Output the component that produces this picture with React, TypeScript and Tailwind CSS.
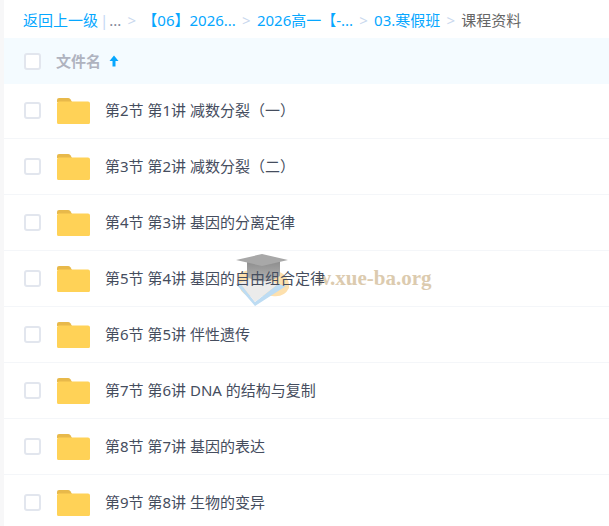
import React from "react";

const rows = [
  "第2节 第1讲 减数分裂（一）",
  "第3节 第2讲 减数分裂（二）",
  "第4节 第3讲 基因的分离定律",
  "第5节 第4讲 基因的自由组合定律",
  "第6节 第5讲 伴性遗传",
  "第7节 第6讲 DNA 的结构与复制",
  "第8节 第7讲 基因的表达",
  "第9节 第8讲 生物的变异",
];

function Folder() {
  return (
    <svg width="33" height="26" viewBox="0 0 33 26" className="shrink-0 block">
      <path d="M0 2a2 2 0 0 1 2-2h9a3 3 0 0 1 2.4 1.2L15 4H0z" fill="#e8b94a" />
      <path d="M0 5.5a2 2 0 0 1 2-2h29a2 2 0 0 1 2 2V24.5a1.5 1.5 0 0 1-1.5 1.5H1.5A1.5 1.5 0 0 1 0 24.5z" fill="#ffd257" />
    </svg>
  );
}

function Check() {
  return <span className="block w-[17px] h-[17px] rounded-[3px] border-2 border-[#e2e6ee] bg-white shrink-0" />;
}

function Sep() {
  return <span className="text-[#c9d8ee] mx-[6px] w-[9px] text-center">&gt;</span>;
}

export default function App() {
  return (
    <div
      className="relative w-[609px] h-[526px] overflow-hidden bg-white pl-1"
      style={{ fontFamily: '"Noto Sans", "Noto Sans CJK SC", sans-serif' }}
    >
      <div className="absolute left-0 top-0 bottom-0 w-1 bg-[#f7f7f8]" />
      <div className="h-[38px] pl-[19px] pt-[3px] flex items-center text-[15px] text-[#06a7ff] whitespace-nowrap">
        <span>返回上一级</span>
        <span className="text-[#c4d8f4] ml-[2px] mr-px">|</span>
        <span className="text-[#818999]">...</span>
        <Sep />
        <span>【06】2026...</span>
        <Sep />
        <span>2026高一【-...</span>
        <Sep />
        <span>03.寒假班</span>
        <Sep />
        <span className="text-[#666]">课程资料</span>
      </div>
      <div className="h-[46px] bg-[#f4fbff] pl-5 flex items-center">
        <Check />
        <span className="ml-[15px] text-[15px] font-bold text-[#afb3bf]">文件名</span>
        <svg width="10" height="12" viewBox="0 0 10 12" className="ml-2">
          <path d="M5 0.5 L9.5 6 H6.5 V11.5 H3.5 V6 H0.5 Z" fill="#06a7ff" />
        </svg>
      </div>
      <div className="relative z-10 -mt-px">
        {rows.map((t) => (
          <div key={t} className="h-[56px] pl-5 flex items-center border-b border-[#f4f6f9]">
            <Check />
            <span className="ml-4"><Folder /></span>
            <span className="ml-[15px] text-[15px] text-[#454d5e] whitespace-nowrap">{t}</span>
          </div>
        ))}
      </div>
      <div className="absolute left-[234px] top-[252px] w-[200px] h-[56px] pointer-events-none">
        <svg width="64" height="56" viewBox="0 0 64 56" className="absolute left-0 top-0">
          <defs>
            <linearGradient id="capBody" x1="0" y1="0" x2="0" y2="1">
              <stop offset="0" stopColor="#8a8a8a" />
              <stop offset="1" stopColor="#b4b4b4" />
            </linearGradient>
          </defs>
          <path d="M5 28 Q2 20 16 18 L40 18 Q56 22 55 36 Q50 46 38 44 L14 44 Q4 40 5 28Z" fill="#fde0ad" />
          <path d="M2 32 L21 54 L52 34 L44 32 L21 50 L6 31 Z" fill="#bddcf3" />
          <path d="M6 31 L21 50 L44 32 L24 24 Z" fill="#ebebeb" />
          <path d="M13 8 L46 8 L46 24 Q30 34 13 25 Z" fill="url(#capBody)" />
          <path d="M2 8 L28 2 L54 8 L28 14 Z" fill="#a8a8a8" />
        </svg>
        <span
          className="absolute left-[82px] top-[13px] text-[21px] font-bold text-[#dccbaf] whitespace-nowrap leading-[26px]"
          style={{ fontFamily: '"Liberation Serif", serif' }}
        >
          w.xue-ba.org
        </span>
      </div>
    </div>
  );
}
